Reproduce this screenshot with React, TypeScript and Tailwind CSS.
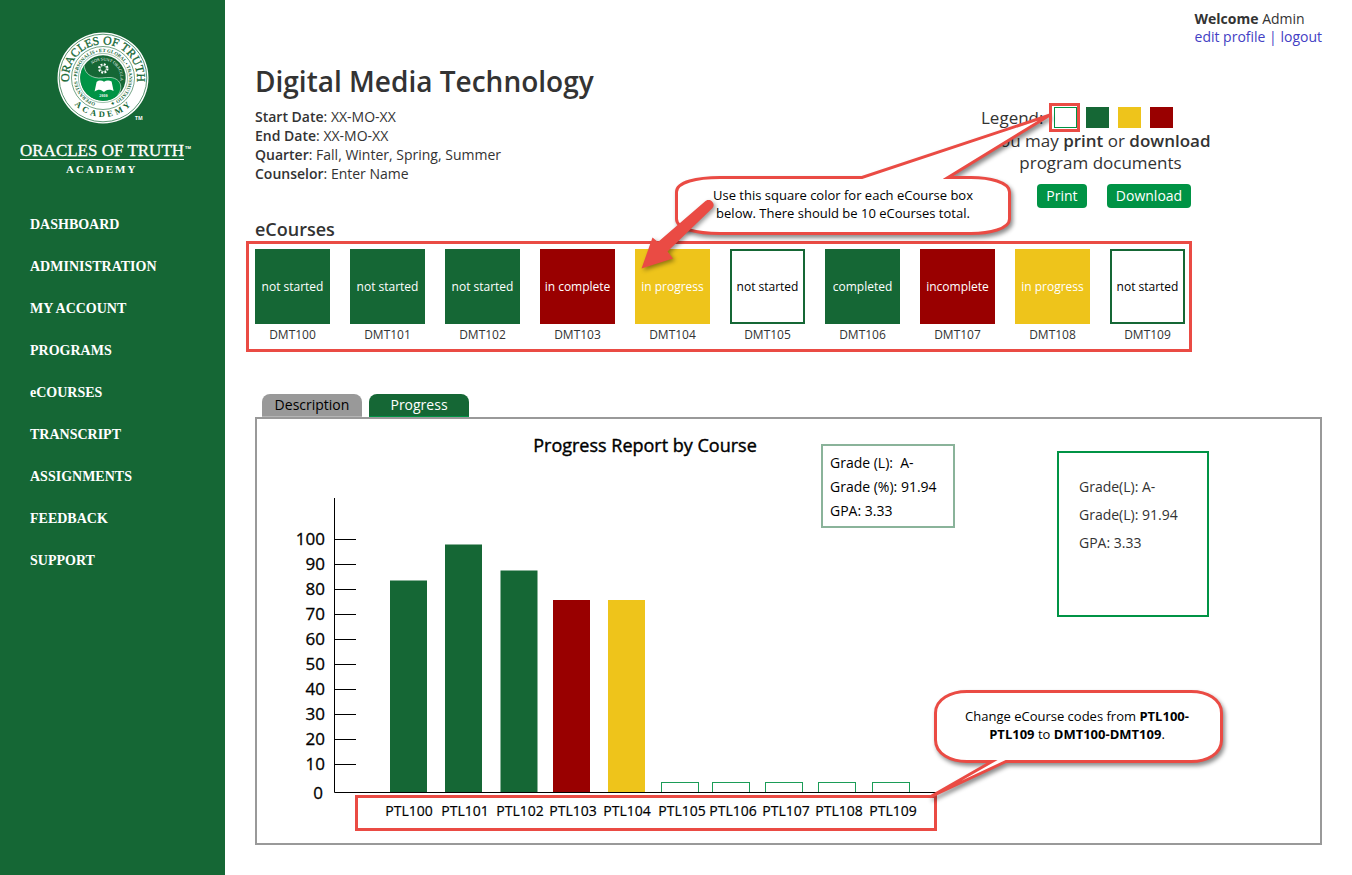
import React from "react";

type Status = "open" | "green" | "red" | "yellow";

const NAV = [
  "DASHBOARD",
  "ADMINISTRATION",
  "MY ACCOUNT",
  "PROGRAMS",
  "eCOURSES",
  "TRANSCRIPT",
  "ASSIGNMENTS",
  "FEEDBACK",
  "SUPPORT",
];

const COURSES: { code: string; label: string; status: Status }[] = [
  { code: "DMT100", label: "not started", status: "green" },
  { code: "DMT101", label: "not started", status: "green" },
  { code: "DMT102", label: "not started", status: "green" },
  { code: "DMT103", label: "in complete", status: "red" },
  { code: "DMT104", label: "in progress", status: "yellow" },
  { code: "DMT105", label: "not started", status: "open" },
  { code: "DMT106", label: "completed", status: "green" },
  { code: "DMT107", label: "incomplete", status: "red" },
  { code: "DMT108", label: "in progress", status: "yellow" },
  { code: "DMT109", label: "not started", status: "open" },
];

const TILE: Record<Status, string> = {
  open: "border-2 border-[#156735] bg-white text-black",
  green: "bg-[#156735] text-white",
  red: "bg-[#990000] text-white",
  yellow: "bg-[#eec41b] text-white",
};

const META = [
  ["Start Date", "XX-MO-XX"],
  ["End Date", "XX-MO-XX"],
  ["Quarter", "Fall, Winter, Spring, Summer"],
  ["Counselor", "Enter Name"],
];

const BARS = [
  { code: "PTL100", x: 133, top: 161.5, fill: "#156735" },
  { code: "PTL101", x: 188, top: 125.5, fill: "#156735" },
  { code: "PTL102", x: 243.5, top: 151.5, fill: "#156735" },
  { code: "PTL103", x: 296, top: 181, fill: "#990000" },
  { code: "PTL104", x: 351, top: 181, fill: "#eec41b" },
  { code: "PTL105", x: 404, top: 363, fill: "" },
  { code: "PTL106", x: 455, top: 363, fill: "" },
  { code: "PTL107", x: 508, top: 363, fill: "" },
  { code: "PTL108", x: 561, top: 363, fill: "" },
  { code: "PTL109", x: 615, top: 363, fill: "" },
];

const LABEL_X = [152, 208, 263, 316, 370, 425, 476, 529, 582, 636];

const SERIF = "'Liberation Serif', serif";

function Seal() {
  return (
    <svg width="96" height="96" viewBox="0 0 96 96" role="img" aria-label="Academy seal">
      <defs>
        <path id="arcOuter" d="M14.900 56 A34 34 0 1 1 81.100 56" />
        <path id="arcMotto" d="M48 74 A26 26 0 1 1 48.100 74" />
        <path id="arcInner" d="M37.200 34.200 A17.500 17.500 0 0 1 63 57" />
        <path id="arcBase" d="M11.600 62 A39 39 0 0 0 84.400 62" />
      </defs>
      <circle cx="48" cy="48" r="45.5" fill="#fff" />
      <circle cx="48" cy="48" r="43.8" fill="none" stroke="#156735" strokeWidth="0.7" />
      <circle cx="48" cy="48" r="31.5" fill="none" stroke="#156735" strokeWidth="0.6" />
      <circle cx="48" cy="48" r="24.6" fill="none" stroke="#156735" strokeWidth="0.4" />
      <circle cx="48" cy="48" r="22.7" fill="#156735" />
      <path
        d="M29 35.500 A22.700 22.700 0 0 0 48 70.700 C54 70.700 59 69 62.500 65.500 C68 59 67 49 56 47.500 C50 47 45 49 40 47.500 C33 45.500 30 42 29 35.500Z"
        fill="#009345"
      />
      <path d="M29 35.500 C30 42 33 45.500 40 47.500 C45 49 50 47 56 47.500 C67 49 68 59 62.500 65.500" fill="none" stroke="#cfe5d6" strokeWidth="0.7" />
      <circle cx="48.300" cy="38.500" r="4.200" fill="none" stroke="#fff" strokeWidth="2" strokeDasharray="1.9 1.4" />
      <circle cx="48.300" cy="38.500" r="3" fill="none" stroke="#fff" strokeWidth="0.6" />
      <path
        d="M41.600 52 C44 50 47 50.300 49 51.800 C51.400 50 54.500 50 56.600 51.600 L58.600 61 C55.500 59.200 52.500 59.500 50.600 60.700 C49.600 62 48.200 62 47.200 60.700 C45 59.400 42.600 59.500 39.600 61.600Z"
        fill="#fff"
      />
      <text fontFamily={SERIF} fontSize="11.8" fill="#156735" stroke="#156735" strokeWidth="0.3">
        <textPath href="#arcOuter" startOffset="50%" textAnchor="middle">ORACLES OF TRUTH</textPath>
      </text>
      <text fontFamily={SERIF} fontSize="8.5" fontWeight="700" fill="#156735" letterSpacing="3">
        <textPath href="#arcBase" startOffset="51%" textAnchor="middle">ACADEMY</textPath>
      </text>
      <text fontFamily={SERIF} fontSize="4.9" fontWeight="700" fill="#156735">
        <textPath href="#arcMotto" startOffset="50%" textAnchor="middle">
          OPERANTES • PERSONALIS • ET GLOBAL • TRANSMUTATIO ✦
        </textPath>
      </text>
      <text fontFamily={SERIF} fontSize="4.2" fill="#fff">
        <textPath href="#arcInner" startOffset="0">NOS SUNT ORACULA</textPath>
      </text>
      <text x="48.500" y="67" fontFamily={SERIF} fontSize="4.2" fontWeight="700" fill="#fff" textAnchor="middle">2010</text>
      <text x="80" y="90" fontFamily="'Open Sans', sans-serif" fontSize="5" fontWeight="700" fill="#fff">TM</text>
    </svg>
  );
}

function Sidebar() {
  return (
    <aside className="w-[225px] shrink-0 bg-[#156735] pt-[30px] text-white">
      <div className="pl-[55px]">
        <Seal />
      </div>
      <svg className="ml-5 mt-4 block" width="180" height="34" viewBox="0 0 180 34" role="img" aria-label="Oracles of Truth Academy">
        <text x="0" y="14" fontFamily={SERIF} fontSize="17" fill="#fff" stroke="#fff" strokeWidth="0.3">ORACLES OF TRUTH</text>
        <text x="165" y="7" fontFamily="'Open Sans', sans-serif" fontSize="4" fontWeight="700" fill="#fff">TM</text>
        <path d="M0 17.500H164" stroke="#fff" strokeWidth="1" />
        <text x="46" y="31" fontFamily={SERIF} fontSize="11" fontWeight="700" fill="#fff" letterSpacing="2">ACADEMY</text>
      </svg>
      <nav className="mt-7 flex flex-col pl-[30px] font-['Liberation_Serif',serif] text-[14px] font-bold leading-[42px]">
        {NAV.map((item) => (
          <a key={item} href="#">{item}</a>
        ))}
      </nav>
    </aside>
  );
}

function LegendCallout() {
  return (
    <div className="pointer-events-none absolute left-[380px] top-[33px] h-[190px] w-[450px]">
      <svg className="absolute inset-0" width="450" height="190" viewBox="0 0 450 190" aria-hidden="true">
        <g className="drop-shadow-[2px_3px_2px_rgba(0,0,0,0.45)]">
          <path
            d="M85 80.5H227L415 18L313 80.5H336C354 80.5 374.500 85 374.500 95V122C374.500 132 354 136.500 336 136.500H85C62 136.500 41.500 132 41.500 122V95C41.500 85 62 80.500 85 80.500Z"
            fill="#fff"
            stroke="#ea4b44"
            strokeWidth="3"
          />
        </g>
        <rect x="415.500" y="7.500" width="28" height="26" fill="none" stroke="#ea4b44" strokeWidth="3" />
      </svg>
      <p className="absolute left-[45px] top-[89px] w-[326px] text-center text-[13px] leading-[18px] text-black">
        Use this square color for each eCourse box
        <br />
        below. There should be 10 eCourses total.
      </p>
      <svg className="absolute inset-0 drop-shadow-[2px_2px_2px_rgba(0,0,0,0.4)]" width="450" height="190" viewBox="0 0 450 190" aria-hidden="true">
        <path d="M6.500 171.500L17.500 140.500L23 145L70.500 104A5 5 0 0 1 77.500 111L32.500 154.500L38 161.500Z" fill="#ea4b44" />
      </svg>
    </div>
  );
}

function CodesCallout() {
  return (
    <div className="pointer-events-none absolute left-[98px] top-[268px] h-[150px] w-[880px]">
      <svg className="absolute inset-0" width="880" height="150" viewBox="0 0 880 150" aria-hidden="true">
        <rect x="1.500" y="109.500" width="579" height="33" fill="none" stroke="#ea4b44" strokeWidth="3" />
        <path
          className="drop-shadow-[2px_3px_2px_rgba(0,0,0,0.45)]"
          d="M612 4.500H836C852 4.500 866.500 12 866.500 26V53C866.500 67 852 74.500 836 74.500H651L575 110L637 74.500H612C596 74.500 580.500 67 580.500 53V26C580.500 12 596 4.500 612 4.500Z"
          fill="#fff"
          stroke="#ea4b44"
          strokeWidth="3"
        />
      </svg>
      <p className="absolute left-[584px] top-5 w-[276px] text-center text-[13px] leading-[18px] text-black">
        Change eCourse codes from <b>PTL100-</b>
        <br />
        <b>PTL109</b> to <b>DMT100-DMT109</b>.
      </p>
    </div>
  );
}

function Chart() {
  return (
    <svg
      className="block"
      width="698"
      height="424"
      viewBox="0 0 698 424"
      fontFamily="'Open Sans', sans-serif"
      role="img"
      aria-label="Progress Report by Course"
    >
      <text x="388" y="33" fontSize="18" stroke="#000" strokeWidth="0.4" textAnchor="middle">Progress Report by Course</text>
      {[100, 90, 80, 70, 60, 50, 40, 30, 20, 10].map((v, i) => (
        <g key={v}>
          <path d={`M77 ${120.5 + i * 25}H99`} stroke="#000" />
          <text x="68" y={126 + i * 25} fontSize="17" stroke="#000" strokeWidth="0.3" textAnchor="end">{v}</text>
        </g>
      ))}
      <text x="66" y="380" fontSize="17" stroke="#000" strokeWidth="0.3" textAnchor="end">0</text>
      {BARS.map((b, i) => (
        <g key={b.code}>
          {b.fill ? (
            <rect x={b.x} y={b.top} width="37" height={373 - b.top} fill={b.fill} />
          ) : (
            <rect x={b.x + 0.5} y={b.top + 0.5} width="37" height="10" fill="#fff" stroke="#1b9c57" />
          )}
          <text x={LABEL_X[i]} y="397" fontSize="14" stroke="#000" strokeWidth="0.2" textAnchor="middle">{b.code}</text>
        </g>
      ))}
      <path d="M77.500 79V373.500H680" fill="none" stroke="#000" />
    </svg>
  );
}

export default function App() {
  return (
    <div className="flex min-h-screen bg-white font-['Open_Sans',sans-serif] text-[#333]">
      <Sidebar />
      <main className="min-w-0 flex-1 px-[30px] pb-[30px] pt-[10px]">
        <div className="flex justify-end text-[14px] leading-[18px]">
          <div>
            <div><b>Welcome</b> Admin</div>
            <div className="text-[#4340c4]">
              <a href="#">edit profile</a> | <a href="#">logout</a>
            </div>
          </div>
        </div>

        <section className="relative mt-[18px]">
          <div className="flex">
            <div className="w-[726px] shrink-0">
              <h1 className="text-[28px] font-semibold leading-[34px]">Digital Media Technology</h1>
              <div className="mt-[9px] text-[14px] leading-[19px]">
                {META.map(([k, v]) => (
                  <p key={k}><span className="font-semibold">{k}</span>: {v}</p>
                ))}
              </div>
            </div>
            <div className="w-[239px] shrink-0 pt-[43px] text-[17px] leading-[22px]">
              <div className="flex h-[21px] gap-[9px]">
                <span className="w-[64px]">Legend:</span>
                <span className="w-[23px] border border-[#009345]" />
                <span className="w-[23px] bg-[#156735]" />
                <span className="w-[23px] bg-[#eec41b]" />
                <span className="w-[23px] bg-[#990000]" />
              </div>
              <p className="mt-[2px] text-center">
                You may <span className="font-semibold">print</span> or <span className="font-semibold">download</span>
                <br />
                program documents
              </p>
              <div className="mt-[10px] flex gap-5 pl-[56px] text-[14px] leading-[24px] text-white">
                <button className="w-[50px] rounded bg-[#009345]">Print</button>
                <button className="w-[84px] rounded bg-[#009345]">Download</button>
              </div>
            </div>
          </div>

          <h2 className="mt-[9px] text-[18px] font-semibold leading-[24px]">eCourses</h2>
          <div className="-ml-[9px] flex w-fit gap-5 border-3 border-[#ea4b44] pb-[3px] pl-[6px] pr-[4px] pt-[5px]">
            {COURSES.map((c) => (
              <div key={c.code} className="w-[75px] text-center">
                <div className={`flex h-[75px] items-center justify-center whitespace-nowrap text-[12px] ${TILE[c.status]}`}>
                  {c.label}
                </div>
                <div className="text-[12px] leading-[22px]">{c.code}</div>
              </div>
            ))}
          </div>
          <LegendCallout />
        </section>

        <section className="mt-[42px]">
          <div className="flex gap-[7px] pl-[7px] text-[14px] leading-[22px]">
            <button className="w-[100px] rounded-t-lg border-b border-[#b5b5b5] bg-[#999] text-black">Description</button>
            <button className="w-[100px] rounded-t-lg border-b border-[#009345] bg-[#156735] text-white">Progress</button>
          </div>
          <div className="relative flex items-start border-2 border-[#999]">
            <div className="relative shrink-0">
              <Chart />
              <div className="absolute right-0 top-[25px] h-[84px] w-[134px] border-2 border-[#8ab39a] pl-[7px] pt-[5px] text-[14px] leading-[24px] text-black">
                <p>Grade (L):&nbsp; A-</p>
                <p>Grade (%): 91.94</p>
                <p>GPA: 3.33</p>
              </div>
            </div>
            <div className="ml-[102px] mt-[32px] h-[166px] w-[152px] shrink-0 border-2 border-[#009345] pl-5 pt-5 text-[14px] leading-[28px]">
              <p>Grade(L): A-</p>
              <p>Grade(L): 91.94</p>
              <p>GPA: 3.33</p>
            </div>
            <CodesCallout />
          </div>
        </section>
      </main>
    </div>
  );
}
